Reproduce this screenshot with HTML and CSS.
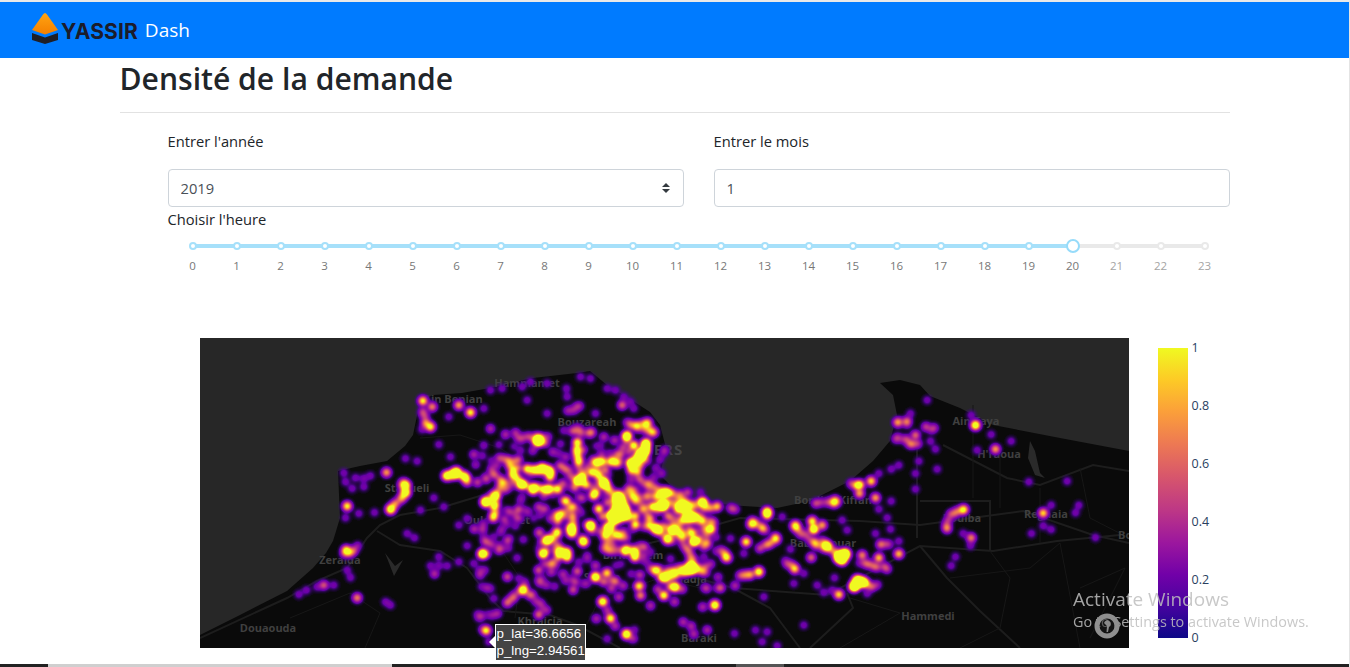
FILE: index.html
```html
<!DOCTYPE html>
<html lang="fr">
  <head>
    <meta charset="UTF-8" />
    <meta name="viewport" content="width=device-width, initial-scale=1.0" />
    <title>Yassir Dash</title>
    <link rel="stylesheet" href="styles.css">
  </head>
  <body>
    <nav class="navbar">
      <svg class="logo" width="28" height="36" viewBox="0 0 28 36">
        <defs>
          <linearGradient id="logoFill" x1="0" y1="0" x2="0" y2="1">
            <stop offset="0" stop-color="#ffa412" />
            <stop offset="1" stop-color="#f47f00" />
          </linearGradient>
        </defs>
        <path d="M14 1 Q15 1 16 2.500 L27 18 L14 22.500 L1 18 L12 2.500 Q13 1 14 1 Z" fill="url(#logoFill)" />
        <path d="M1 21 L14 25.500 L27 21 L27 28 L14 32 L1 28 Z" fill="#1f1f26" />
      </svg>
      <span class="brand-name">YASSIR</span>
      <span class="brand-sub">Dash</span>
    </nav>

    <main class="container">
      <h1>Densité de la demande</h1>
      <hr />

      <div class="filters">
        <div class="field">
          <label for="annee">Entrer l'année</label>
          <select id="annee" class="form-control select">
            <option>2019</option>
            <option>2020</option>
          </select>
        </div>
        <div class="field">
          <label for="mois">Entrer le mois</label>
          <input id="mois" class="form-control" type="text" value="1" />
        </div>
      </div>

      <div class="hour-label">Choisir l'heure</div>
      <div class="slider" id="slider"></div>

      <div class="chart">
        <div class="map">
          <svg class="map-base" width="929" height="310" viewBox="0 0 929 310">
            <path class="land" d="M0 297 L40 277 L87 253 L113 230 L126 215 L133 203 L140 180 L138 133 L160 128 L187 123 L205 108 L213 97 L220 63 L233 57 L262 55 L290 50 L315 44 L333 40 L377 35 L390 33 L407 47 L433 63 L450 74 L460 87 L466 110 L460 137 L480 157 L510 165 L543 168 L577 170 L610 163 L650 143 L673 123 L690 103 L697 77 L693 57 L680 45 L700 42 L720 47 L730 58 L760 70 L793 87 L860 100 L929 113 L929 310 L0 310 Z" />
            <path class="lake" d="M830 103 L835 113 L840 135 L845 140 L835 137 L828 120 Z" />
            <path class="lake" d="M185 215 L195 228 L203 222 L194 238 L189 225 Z" />
            <g class="road">
              <path d="M0 300 L87 260 L117 243 L147 230 L167 200 L180 187 L200 177 L240 170 L283 157" />
              <path d="M177 193 L200 207 L240 213 L267 230 L290 260 L303 273 L350 277 L377 287 L420 310" />
              <path d="M533 250 L627 257 L720 208 L793 213 L857 203 L920 197" />
              <path d="M720 208 L747 240 L780 273 L820 310" />
              <path d="M717 103 L717 200" />
              <path d="M720 163 L790 163 L790 213" />
              <path d="M743 107 L807 140 L840 147 L893 127 L929 133" />
              <path d="M660 183 L720 187 L823 173 L893 197 L929 205" />
              <path d="M460 230 L533 250 L570 270 L600 310" />
              <path d="M610 310 L653 270 L647 255" />
              <path d="M430 210 L470 200 L540 180 L660 183" />
            </g>
            <g class="road thin">
              <path d="M220 100 L260 97 L300 110 L330 130 L380 150" />
              <path d="M270 190 L300 210 L320 240 L315 280" />
              <path d="M90 280 L150 255 L180 275 L165 310" />
              <path d="M380 300 L400 260 L460 240 L500 250" />
              <path d="M800 115 L800 170 M773 67 L773 160 M840 150 L840 205" />
              <path d="M860 205 L880 310 M750 240 L830 230 L860 205" />
              <path d="M640 310 L700 275 L650 260 M880 130 L890 180 L929 200" />
              <path d="M790 213 L810 240 L800 290 L760 310" />
              <path d="M880 250 L925 230 L890 300" />
            </g>
            <g class="place">
              <text x="327" y="49">Hammamet</text>
              <text x="253" y="65">Ain Benian</text>
              <text x="387" y="88">Bouzareah</text>
              <text x="207" y="154">Staoueli</text>
              <text x="297" y="186">Ouled Fayet</text>
              <text x="140" y="226">Zeralda</text>
              <text x="68" y="294">Douaouda</text>
              <text x="340" y="287">Khraicia</text>
              <text x="433" y="221">Birkhadem</text>
              <text x="402" y="243">Saoula</text>
              <text x="499" y="304">Baraki</text>
              <text x="728" y="282">Hammedi</text>
              <text x="776" y="87">Ain Taya</text>
              <text x="799" y="120">H'raoua</text>
              <text x="633" y="166">Bordj El Kiffan</text>
              <text x="762" y="184">Rouiba</text>
              <text x="846" y="180">Reghaia</text>
              <text x="623" y="209">Bab Ezzouar</text>
              <text x="488" y="245">Baadja</text>
              <text x="918" y="201" class="edge">Boudouaou</text>
              <text class="city" x="415" y="117">ALGIERS</text>
            </g>
          </svg>
          <canvas class="heat" id="heat" width="929" height="310"></canvas>
          <div class="tooltip">
            <div>p_lat=36.6656</div>
            <div>p_lng=2.94561</div>
          </div>
        </div>

        <div class="colorbar">
          <div class="colorbar-ramp"></div>
          <div class="colorbar-ticks">
            <span>1</span>
            <span>0.8</span>
            <span>0.6</span>
            <span>0.4</span>
            <span>0.2</span>
            <span>0</span>
          </div>
        </div>
      </div>
    </main>

    <!-- Windows watermark and click marker sit on top of the page -->
    <div class="activate">
      <div class="activate-title">Activate Windows</div>
      <div class="activate-sub">Go to Settings to activate Windows.</div>
    </div>
    <svg class="click-ring" width="26" height="26" viewBox="0 0 26 26">
      <circle cx="13" cy="13" r="10" fill="rgba(30,30,30,0.55)" stroke="#8f8f8f" stroke-width="5" />
      <path d="M10 10 A3.500 3.500 0 1 1 15 14 L14 19 L12.500 19 L13 13 Z" fill="#8a8a8a" />
    </svg>

    <div class="taskbar">
      <div class="taskbar-tab"></div>
      <div class="taskbar-active"></div>
    </div>

    <script src="map.js"></script>
  </body>
</html>
```

FILE: styles.css
```css
* {
  box-sizing: border-box;
}

html,
body {
  height: 667px;
  overflow: hidden;
}

body {
  margin: 0;
  border-top: 2px solid #e9e9e9;
  border-right: 1px solid #e4e4e4;
  font-family: "Open Sans", "Noto Sans", Arial, sans-serif;
  color: #212529;
  background: #fff;
  display: flex;
  flex-direction: column;
  position: relative;
}

.navbar {
  height: 56px;
  flex: none;
  background-color: #007bff;
  display: flex;
  align-items: center;
  padding-left: 31px;
}

.brand-name {
  margin-left: 2px;
  margin-top: 2px;
  font-family: Inter, Arial, sans-serif;
  font-size: 21px;
  font-weight: 700;
  letter-spacing: 0.1px;
  color: #1b1c2b;
}

.brand-sub {
  margin-left: 7px;
  font-size: 19px;
  color: #fff;
}

.container {
  width: 1110px;
  margin: 0 auto;
  flex: none;
}

h1 {
  margin: 0;
  font-size: 30.100px;
  line-height: 42px;
  font-weight: 600;
}

hr {
  margin: 12px 0 0;
  border: 0;
  border-top: 1px solid #e2e2e2;
}

.filters {
  display: flex;
  gap: 30px;
  padding-left: 48px;
  margin-top: 17px;
}

.field {
  flex: 1;
}

.field label {
  display: block;
  font-size: 14.700px;
  line-height: 22px;
  margin-bottom: 17px;
}

.form-control {
  display: block;
  width: 100%;
  height: 38px;
  padding: 6px 12px;
  font-family: inherit;
  font-size: 14.700px;
  color: #495057;
  background-color: #fff;
  border: 1px solid #ced4da;
  border-radius: 4px;
}

.select {
  appearance: none;
  background-image: url("data:image/svg+xml,%3Csvg xmlns='http://www.w3.org/2000/svg' width='10' height='12'%3E%3Cpath fill='%23343a40' d='M5 1 L9 5 L1 5 Z M5 11 L1 7 L9 7 Z'/%3E%3C/svg%3E");
  background-repeat: no-repeat;
  background-position: right 12px center;
}

.hour-label {
  margin: 1px 0 0 48px;
  font-size: 14.700px;
  line-height: 22px;
}

.slider {
  display: grid;
  grid-template-columns: repeat(24, 44px);
  margin: 9px 0 0 51px;
  width: 1056px;
}

.mark {
  display: flex;
  flex-direction: column;
  align-items: center;
  height: 36px;
  font-size: 11.500px;
  color: #777;
}

.mark.off {
  color: #a4a4a4;
}

.mark-track {
  width: 100%;
  height: 14px;
  display: flex;
  align-items: center;
  justify-content: center;
  background: linear-gradient(#a6e0fa, #a6e0fa) center / 100% 4px no-repeat;
}

.mark.off .mark-track {
  background-image: linear-gradient(#e9e9e9, #e9e9e9);
}

.mark.first .mark-track {
  background-size: 50% 4px;
  background-position: right center;
}

.mark.last .mark-track {
  background-size: 50% 4px;
  background-position: left center;
}

.mark.now .mark-track {
  background-image: linear-gradient(90deg, #a6e0fa 50%, #e9e9e9 50%);
}

.dot {
  width: 8px;
  height: 8px;
  background: #fff;
  border: 2px solid #a6e0fa;
  border-radius: 50%;
}

.mark.off .dot {
  border-color: #e9e9e9;
}

.mark.now .dot {
  width: 14px;
  height: 14px;
  border-color: #96dbfa;
}

.mark-label {
  margin-top: 5px;
  line-height: 16px;
}

.chart {
  display: flex;
  margin: 63px 0 0 80px;
}

.map {
  position: relative;
  width: 929px;
  height: 310px;
  background: #272727;
  flex: none;
}

.map-base {
  display: block;
}

.land {
  fill: #0a0a0a;
}

.lake {
  fill: #2a2a2a;
}

.road path {
  fill: none;
  stroke: #1d1d1d;
  stroke-width: 2;
}

.road.thin path {
  stroke: #171717;
  stroke-width: 1;
}

.place text {
  font-family: "Open Sans", Arial, sans-serif;
  font-size: 11px;
  font-weight: 700;
  fill: #404040;
  text-anchor: middle;
}

.place .edge {
  text-anchor: start;
}

.place .city {
  font-size: 15px;
  letter-spacing: 1px;
  text-anchor: start;
  fill: #444;
}

.heat {
  position: absolute;
  top: 0;
  left: 0;
}

.tooltip {
  position: absolute;
  left: 295px;
  top: 286px;
  width: 91px;
  padding: 1px 0 1px 1px;
  background: #444;
  border: 1px solid #fff;
  font-family: "Liberation Sans", Arial, sans-serif;
  font-size: 13.300px;
  line-height: 16.500px;
  color: #fff;
  white-space: nowrap;
}

.tooltip::before {
  content: "";
  position: absolute;
  left: -7px;
  top: 11px;
  border: 6px solid transparent;
  border-left-width: 0;
  border-right: 6px solid #fff;
}

.colorbar {
  display: flex;
  margin: 4px 0 0 29px;
  height: 302px;
}

.colorbar-ramp {
  width: 30px;
  height: 290px;
  margin-top: 6px;
  background: linear-gradient(to top, #0d0887, #46039f 11%, #7201a8 22%, #9c179e 33%, #bd3786 44%, #d8576b 56%, #ed7953 67%, #fb9f3a 78%, #fdca26 89%, #f0f921);
}

.colorbar-ticks {
  display: flex;
  flex-direction: column;
  justify-content: space-between;
  margin-left: 4px;
  font-size: 12.500px;
  line-height: 12px;
  color: #2a3f5f;
}

.activate {
  position: absolute;
  left: 1073px;
  top: 585px;
  color: rgba(190, 190, 190, 0.85);
  white-space: nowrap;
}

.activate-title {
  font-size: 19px;
  line-height: 25px;
}

.activate-sub {
  font-size: 14.400px;
  line-height: 20px;
}

.click-ring {
  position: absolute;
  left: 1094px;
  top: 611px;
}

.taskbar {
  margin-top: auto;
  height: 3px;
  flex: none;
  background: #222;
  display: flex;
}

.taskbar-tab {
  width: 344px;
  margin-left: 48px;
  background: #cfcfcf;
}

.taskbar-active {
  width: 48px;
  margin-left: 344px;
  background: #555;
}
```

FILE: map.js
```js
// Hour slider marks
const slider = document.getElementById("slider");
for (let h = 0; h < 24; h++) {
  const mark = document.createElement("div");
  mark.className = "mark";
  if (h > 20) mark.classList.add("off");
  if (h === 20) mark.classList.add("now");
  if (h === 0) mark.classList.add("first");
  if (h === 23) mark.classList.add("last");
  mark.innerHTML = `<div class="mark-track"><div class="dot"></div></div><div class="mark-label">${h}</div>`;
  slider.appendChild(mark);
}

// Demand points, read off in windows of the map: [originX, originY, points]
// point: [x, y, weight], x and y are at 3x scale inside the window
const HOT = 1;
const LOW = 0.14;
const points = [];

// fixed seed so the picture is the same on every load
let seed = 20;
function rnd() {
  seed = (seed * 16807) % 2147483647;
  return seed / 2147483647;
}

function add(ox, oy, list, weight = HOT) {
  list.forEach(([x, y, w]) => {
    points.push([ox + x / 3, oy + y / 3, w === undefined ? weight : w]);
  });
}

function line(ox, oy, coords, weight) {
  for (let i = 0; i < coords.length - 1; i++) {
    const [x1, y1] = coords[i];
    const [x2, y2] = coords[i + 1];
    const n = Math.max(1, Math.round(Math.hypot(x2 - x1, y2 - y1) / 12));
    for (let s = 0; s <= n; s++) {
      const jx = (rnd() - 0.5) * 3.5;
      const jy = (rnd() - 0.5) * 3.5;
      const w = weight * (0.5 + rnd());
      points.push([ox + (x1 + ((x2 - x1) * s) / n) / 3 + jx, oy + (y1 + ((y2 - y1) * s) / n) / 3 + jy, w]);
    }
  }
}

// centre of Algiers
const W8 = [470, 420];
[
  [[120, 120], [125, 160], [150, 190], [190, 205], [230, 205], [265, 210]],
  [[190, 145], [240, 150], [240, 170]],
  [[320, 60], [325, 130]],
  [[310, 195], [335, 170], [345, 190]],
  [[385, 155], [405, 195]],
  [[375, 130], [440, 122]],
  [[520, 95], [495, 160]],
  [[505, 100], [480, 150]],
  [[530, 85], [485, 130]],
  [[530, 65], [520, 100]],
  [[440, 220], [430, 300], [410, 340]],
  [[455, 225], [465, 280]],
  [[445, 240], [440, 300]],
  [[460, 270], [420, 285]],
  [[400, 285], [490, 290]],
  [[262, 305], [270, 285]],
  [[72, 222], [72, 295]],
  [[535, 320], [570, 335]],
  [[545, 255], [582, 255]],
  [[650, 290], [680, 290]],
  [[302, 325], [312, 340]],
  [[280, 235], [285, 240]],
  [[375, 215], [372, 222]],
  [[490, 232], [495, 238]],
  [[200, 60], [205, 62]],
].forEach((c) => line(W8[0], W8[1], c, 0.6));
add(W8[0], W8[1], [
  [45, 245], [360, 315], [230, 360], [265, 395], [290, 395], [290, 410], [465, 392], [493, 395], [493, 410],
  [470, 45], [525, 70], [410, 320], [385, 265], [495, 312], [672, 362], [36, 400], [697, 245], [578, 255],
  [490, 75], [218, 400], [338, 362], [260, 335], [170, 145], [215, 145], [205, 60], [365, 155],
], HOT);
[
  [[60, 150], [100, 190], [60, 230]],
  [[240, 290], [310, 260], [300, 340]],
  [[400, 380], [440, 340], [470, 350]],
  [[480, 200], [560, 330], [600, 360]],
  [[600, 250], [700, 250]],
  [[610, 310], [650, 340]],
  [[470, 8], [550, 35], [530, 8], [480, 20]],
  [[300, 30], [360, 40]],
  [[90, 110], [130, 120]],
  [[270, 130], [320, 180], [370, 120]],
  [[440, 130], [470, 60]],
  [[430, 220], [400, 190]],
  [[510, 180], [600, 220], [650, 240]],
  [[590, 290], [690, 300]],
  [[240, 350], [280, 400], [240, 430]],
  [[440, 390], [520, 380]],
  [[650, 320], [700, 380]],
  [[520, 230], [590, 215]],
].forEach((c) => line(W8[0], W8[1], c, 0.28));
add(W8[0], W8[1], [
  [60, 25], [105, 40], [135, 35], [10, 100], [150, 90], [265, 100], [270, 70], [360, 40], [400, 50], [430, 60],
  [150, 240], [145, 265], [110, 310], [90, 335], [10, 325], [35, 325], [60, 370], [85, 375], [205, 338], [218, 268],
  [325, 230], [325, 268], [350, 405], [325, 425], [375, 435], [255, 435], [540, 395], [600, 415], [660, 430], [700, 410],
  [625, 440], [690, 215], [280, 30], [320, 20],
], LOW);

// loose demand filling the city between the streaks
for (let i = 0; i < 240; i++) {
  const x = 475 + rnd() * 245;
  const y = 440 + rnd() * 150;
  const coast = x > 690 ? 510 : x > 665 ? 490 : 430;
  if (y > coast) points.push([x, y, 0.1 + rnd() * rnd() * 0.4]);
}

// west
const W4 = [200, 338];
add(W4[0], W4[1], [
  [667, 187], [695, 205, 0.6], [690, 265], [775, 200, 0.7], [810, 222], [738, 412, 0.9], [765, 403], [790, 412, 0.6],
  [558, 402, 0.7], [617, 440], [617, 462], [570, 513], [440, 503], [856, 490], [437, 635], [847, 646, 0.8],
  [857, 876], [1010, 308, 0.9], [1170, 562], [1040, 605, 0.8], [1150, 610, 0.6], [1278, 295, 0.8], [1205, 790, 0.6],
  [1230, 840, 0.5], [1278, 886, 0.7], [1185, 715, 0.8], [968, 755, 0.8], [1015, 828, 0.5], [702, 706, 0.3],
  [470, 778, 0.6], [370, 740, 0.45], [1265, 200, 0.5], [1028, 645, 0.4],
]);
line(W4[0], W4[1], [[610, 430], [605, 480], [570, 510]], 0.32);
line(W4[0], W4[1], [[740, 410], [770, 403], [805, 430]], 0.5);
line(W4[0], W4[1], [[665, 215], [680, 250], [670, 270]], 0.22);
line(W4[0], W4[1], [[920, 790], [965, 755], [1000, 770]], 0.25);
line(W4[0], W4[1], [[1000, 780], [1040, 815]], 0.18);
line(W4[0], W4[1], [[430, 650], [470, 625]], 0.28);
line(W4[0], W4[1], [[835, 830], [890, 825]], 0.16);
line(W4[0], W4[1], [[1100, 220], [1140, 205]], 0.18);
line(W4[0], W4[1], [[950, 300], [1040, 295]], 0.2);
add(W4[0], W4[1], [
  [430, 403], [435, 430], [465, 418], [490, 420], [490, 445], [510, 412], [455, 450], [435, 538], [475, 525], [522, 522],
  [650, 368], [615, 360], [715, 318], [750, 355], [820, 350], [870, 270], [745, 235], [850, 210], [915, 290], [945, 285],
  [980, 185], [905, 150], [870, 155], [965, 145], [990, 130], [1040, 135], [1098, 150], [1100, 175], [1140, 115], [1170, 120],
  [1220, 150], [1245, 155], [1270, 175], [1290, 190], [1300, 210], [1040, 225], [1185, 225], [1210, 295], [1245, 305],
  [620, 585], [642, 598], [660, 515], [730, 505], [700, 478], [775, 560], [800, 540], [822, 572], [847, 575], [905, 570],
  [800, 622], [875, 620], [905, 630], [775, 670], [715, 655], [690, 682], [715, 682], [740, 682], [820, 675], [838, 695],
  [440, 695], [450, 717], [295, 768], [318, 755], [350, 745], [400, 740], [570, 800], [555, 790], [880, 780], [925, 790],
  [835, 838], [845, 872], [865, 910], [1190, 840], [1220, 815], [1245, 862], [1255, 775], [1350, 800], [1300, 900],
  [1055, 700], [1085, 708], [1125, 730], [1160, 735], [1220, 700], [1270, 742], [1160, 662], [1185, 682], [1020, 585],
], LOW);

// east
const W5 = [660, 338];
add(W5[0], W5[1], [
  [945, 260, 1.4], [1005, 332, 0.7], [1148, 524, 0.9], [908, 514, 0.8], [932, 598, 0.6], [320, 520, 1.4], [320, 530, 0.8],
  [595, 440, 0.8], [597, 465, 0.7], [632, 428, 0.9], [645, 478, 0.7], [765, 290, 0.5], [500, 622, 1.2], [655, 658, 0.8],
  [715, 646, 0.8], [605, 650, 0.6], [535, 768, 0.9], [460, 572, 1.6], [455, 548, 1], [485, 560, 0.7], [405, 560, 0.8],
  [257, 610, 1], [345, 598, 0.8], [197, 657, 0.8], [295, 700, 1.2], [403, 692, 0.7], [452, 657, 0.5], [163, 798, 0.6],
  [150, 572, 1.2], [100, 610, 1], [45, 745, 0.7], [525, 486, 0.6], [273, 558, 0.7], [305, 568, 0.6], [520, 495, 0.5],
]);
add(W5[0], W5[1], [
  [545, 650], [545, 665], [535, 658], [555, 645], [590, 725], [585, 740], [600, 730], [610, 732], [580, 745],
], 1.6);
[
  [[400, 560], [470, 620], [560, 650]],
  [[480, 610], [530, 650]],
  [[595, 670], [680, 690]],
  [[620, 740], [650, 742]],
  [[240, 707], [275, 707]],
  [[180, 630], [200, 660]],
  [[270, 550], [310, 570]],
  [[300, 630], [345, 600]],
  [[370, 670], [405, 690]],
  [[655, 620], [690, 622]],
  [[710, 300], [770, 320]],
  [[705, 250], [745, 250]],
  [[870, 525], [910, 512]],
  [[860, 540], [860, 575]],
  [[470, 490], [530, 490]],
  [[570, 440], [600, 440]],
  [[800, 270], [820, 270]],
  [[0, 470], [20, 490], [60, 510], [170, 505]],
  [[0, 560], [60, 590], [100, 680], [0, 710]],
  [[20, 700], [130, 690]],
  [[60, 520], [150, 550]],
  [[130, 540], [140, 620]],
  [[210, 510], [225, 515]],
].forEach((c) => line(W5[0], W5[1], c, 0.25));
add(W5[0], W5[1], [
  [90, 535, 0.9], [15, 465, 0.9], [5, 500, 1], [125, 490, 0.7], [170, 505, 0.6], [40, 575, 1.2], [20, 600, 0.9],
  [15, 720, 0.7], [90, 690, 0.7], [10, 770, 0.6], [60, 500, 0.6],
]);
add(W5[0], W5[1], [
  [715, 248], [740, 258], [712, 295], [750, 225], [800, 185], [810, 308], [825, 332], [830, 392], [775, 368], [765, 405],
  [765, 452], [715, 380], [692, 392], [655, 405], [692, 488], [655, 512], [680, 538], [690, 572], [645, 585], [715, 608],
  [885, 655], [872, 682], [860, 572], [908, 585], [930, 622], [1052, 308], [932, 230], [992, 288], [950, 335],
  [1105, 430], [1220, 428], [1172, 500], [1148, 562], [1172, 573], [1113, 585], [1255, 500], [1245, 523], [1305, 597],
  [430, 705], [400, 735], [470, 740], [490, 762], [515, 755], [522, 718], [620, 765], [560, 575], [545, 545],
  [225, 742], [128, 805], [68, 850], [92, 862], [100, 885], [140, 875], [222, 885], [285, 875], [320, 880], [305, 910],
  [430, 860], [350, 922], [310, 775], [42, 790], [210, 600], [185, 640], [250, 645], [365, 535], [390, 632], [215, 512],
], LOW);

// south of the centre
const W9 = [520, 540];
add(W9[0], W9[1], [
  [248, 183, 0.7], [270, 233, 0.6], [318, 282, 0.8], [355, 137, 0.9], [405, 90, 1], [425, 112, 0.7], [463, 140, 0.8],
  [583, 195, 0.8], [225, 110, 0.8], [260, 98, 0.7], [360, 165, 0.6], [430, 165, 0.5], [510, 88, 0.6],
]);
line(W9[0], W9[1], [[440, 110], [520, 85], [550, 90]], 0.35);
add(W9[0], W9[1], [
  [260, 210], [225, 235], [283, 257], [342, 268], [335, 295], [260, 295], [390, 197], [295, 170], [462, 184], [488, 245],
  [512, 258], [520, 282], [560, 268], [545, 200], [642, 135], [672, 100], [165, 125], [190, 130], [258, 125], [305, 135],
  [130, 100], [90, 95], [70, 40], [332, 100], [378, 65],
], LOW);

// Sum the gaussians on a float grid, then colour with plasma
const PLASMA = [
  [13, 8, 135], [70, 3, 159], [114, 1, 168], [156, 23, 158], [189, 55, 134], [216, 87, 107],
  [237, 121, 83], [251, 159, 58], [253, 202, 38], [240, 249, 33],
];

function plasma(t) {
  const p = Math.min(0.9999, t) * (PLASMA.length - 1);
  const i = Math.floor(p);
  const f = p - i;
  return PLASMA[i].map((c, k) => c + (PLASMA[i + 1][k] - c) * f);
}

const canvas = document.getElementById("heat");
const ctx = canvas.getContext("2d");
const W = canvas.width;
const H = canvas.height;
const grid = new Float32Array(W * H);
const SIGMA = 3;
const R = 10;

points.forEach(([ax, ay, w]) => {
  const px = ax - 200;
  const py = ay - 338;
  for (let y = Math.max(0, Math.floor(py - R)); y <= Math.min(H - 1, Math.ceil(py + R)); y++) {
    for (let x = Math.max(0, Math.floor(px - R)); x <= Math.min(W - 1, Math.ceil(px + R)); x++) {
      const d2 = (x - px) * (x - px) + (y - py) * (y - py);
      grid[y * W + x] += w * Math.exp(-d2 / (2 * SIGMA * SIGMA));
    }
  }
});

const img = ctx.createImageData(W, H);
for (let i = 0; i < grid.length; i++) {
  const v = grid[i];
  if (v < 0.008) continue;
  const t = Math.min(1, v);
  const [r, g, b] = plasma(0.1 + 0.9 * t);
  img.data[i * 4] = r;
  img.data[i * 4 + 1] = g;
  img.data[i * 4 + 2] = b;
  img.data[i * 4 + 3] = 255 * Math.min(1, v / 0.1);
}
ctx.putImageData(img, 0, 0);
```
